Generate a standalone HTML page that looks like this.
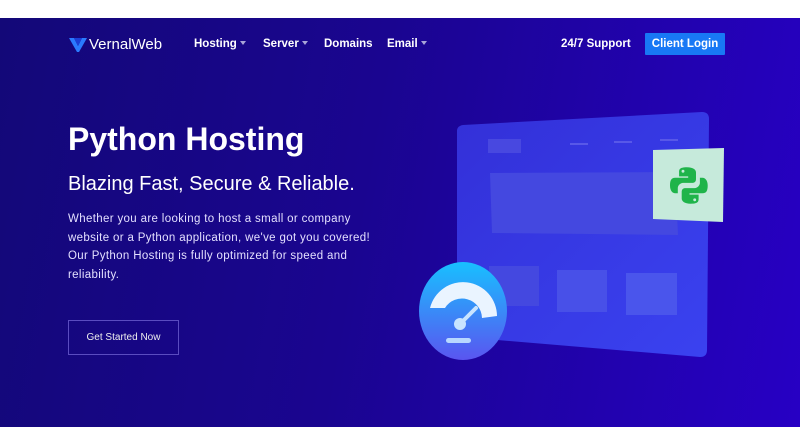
<!DOCTYPE html>
<html><head><meta charset="utf-8"><style>
*{margin:0;padding:0;box-sizing:border-box}
body{width:800px;height:445px;background:#fff;font-family:"Liberation Sans",sans-serif;overflow:hidden;position:relative}
.hero{position:absolute;left:0;top:18px;width:800px;height:409px;background:linear-gradient(100deg,#130878 0%,#1a0590 45%,#2700c4 100%)}
.t{position:absolute;color:#fff;white-space:nowrap}
.nav{font-size:11.5px;font-weight:bold;top:38px}
.car{display:inline-block;width:0;height:0;border-left:3.5px solid transparent;border-right:3.5px solid transparent;border-top:4px solid #a9a5d8;margin-left:3px;vertical-align:2px}
</style></head><body>
<div class="hero"></div>
<svg style="position:absolute;left:68px;top:37px" width="20" height="16" viewBox="0 0 20 16"><path d="M1 1h5l4 8 4-8h5L11 15H9z" fill="#2a7bff"/><path d="M6 1l4 8 4-8" fill="#1b3fd8"/></svg>
<div class="t" style="left:89px;top:36px;font-size:15px">VernalWeb</div>
<div class="t nav" style="left:194px">Hosting<span class="car"></span></div>
<div class="t nav" style="left:263px">Server<span class="car"></span></div>
<div class="t nav" style="left:324px">Domains</div>
<div class="t nav" style="left:387px">Email<span class="car"></span></div>
<div class="t nav" style="left:561px">24/7 Support</div>
<div class="t" style="left:645px;top:33px;width:80px;height:22px;background:#1878f5;font-size:11.5px;font-weight:bold;text-align:center;line-height:22px;border-radius:1px">Client Login</div>
<div class="t" style="left:68px;top:121px;font-size:32px;font-weight:bold">Python Hosting</div>
<div class="t" style="left:68px;top:173px;font-size:20px">Blazing Fast, Secure &amp; Reliable.</div>
<div class="t" style="left:68px;top:210px;font-size:11.5px;line-height:18.5px;color:#e4e0ff;letter-spacing:0.35px">Whether you are looking to host a small or company<br>website or a Python application, we've got you covered!<br>Our Python Hosting is fully optimized for speed and<br>reliability.</div>
<div class="t" style="left:68px;top:320px;width:111px;height:35px;border:1px solid #5a4cc0;font-size:10px;text-align:center;line-height:33px;color:#eee">Get Started Now</div>
<svg style="position:absolute;left:400px;top:100px" width="340" height="280" viewBox="0 0 340 280">
<defs><linearGradient id="p" x1="0" y1="0" x2="1" y2="1"><stop offset="0" stop-color="#3330d8"/><stop offset="1" stop-color="#3a42f0"/></linearGradient>
<linearGradient id="g" x1="0" y1="0" x2="0" y2="1"><stop offset="0" stop-color="#18c0ff"/><stop offset="1" stop-color="#5a55f0"/></linearGradient></defs>
<path d="M63 25 L302 12 Q309 12 309 19 L307 250 Q307 257 300 257 L62 237 Q57 236 57 231 L57 31 Q57 26 63 25Z" fill="url(#p)"/>
<rect x="88" y="39" width="33" height="14" fill="#4848e0"/>
<rect x="170" y="43" width="18" height="2" fill="#5858e8"/><rect x="214" y="41" width="18" height="2" fill="#5858e8"/><rect x="260" y="39" width="18" height="2" fill="#5858e8"/>
<path d="M90 73 L275 72 L278 135 L92 133Z" fill="#4448e0"/>
<rect x="89" y="166" width="50" height="40" fill="#4448e0"/><rect x="157" y="170" width="50" height="42" fill="#4850e8"/><rect x="226" y="173" width="51" height="42" fill="#4a55ec"/>
<path d="M253 50 L324 48 L323 122 L253 119Z" fill="#c6eadb"/>
<g transform="translate(270,66) scale(1.3)" fill="#1fb44a"><path d="M13 1c-6 0-6 2-6 4v3h7v1H4c-3 0-4 2-4 6s2 6 4 6h2v-4c0-2 2-4 4-4h7c2 0 3-1 3-3V5c0-2-2-4-7-4z"/><path d="M16 29c6 0 6-2 6-4v-3h-7v-1h10c3 0 4-2 4-6s-2-6-4-6h-2v4c0 2-2 4-4 4h-7c-2 0-3 1-3 3v5c0 2 2 4 7 4z"/><circle cx="10" cy="4" r="1.1" fill="#c6eadb"/><circle cx="19" cy="26" r="1.1" fill="#c6eadb"/></g>
<ellipse cx="63" cy="211" rx="44" ry="49" fill="url(#g)"/>
<path d="M30 208 A34 34 0 0 1 97 216 L82 218 A20 20 0 0 0 45 208 Z" fill="#eaf4ff"/>
<line x1="62" y1="222" x2="76" y2="208" stroke="#c8e4ff" stroke-width="4" stroke-linecap="round"/>
<circle cx="60" cy="224" r="6" fill="#c8e4ff"/>
<rect x="46" y="238" width="25" height="5" rx="2.5" fill="#b8d8ff"/>
</svg>
</body></html>
